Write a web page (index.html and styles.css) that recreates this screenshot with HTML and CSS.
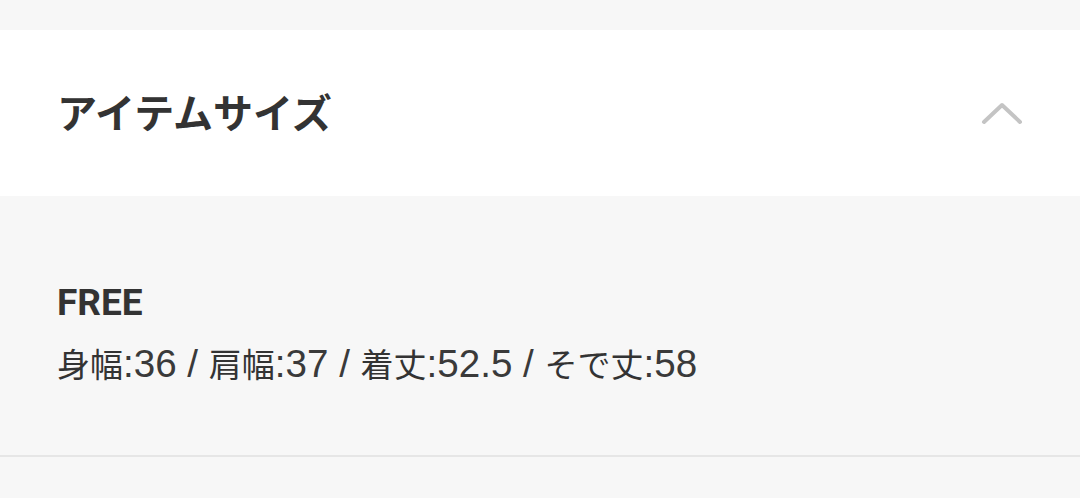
FILE: index.html
```html
<!DOCTYPE html>
<html lang="ja">
<head>
  <meta charset="UTF-8" />
  <meta name="viewport" content="width=device-width, initial-scale=1.0" />
  <title>アイテムサイズ</title>
  <link rel="stylesheet" href="styles.css">
</head>
<body>
  <div class="spacer"></div>
  <section class="accordion">
    <div class="accordion-head">
      <h2 class="accordion-title">アイテムサイズ</h2>
      <svg class="chevron" width="42" height="24" viewBox="0 0 42 24">
        <polyline points="3,21 21,4 39,21" />
      </svg>
    </div>
    <div class="accordion-body">
      <div class="size-name">FREE</div>
      <div class="size-detail"><span class="ja">身幅</span>:36 / <span class="ja">肩幅</span>:37 / <span class="ja">着丈</span>:52.5 / <span class="ja">そで丈</span>:58</div>
    </div>
  </section>
  <div class="divider"></div>
</body>
</html>
```

FILE: styles.css
```css
body {
  margin: 0;
  padding: 0;
  background: #f7f7f7;
  color: #333;
  font-family: Roboto, "Noto Sans CJK JP", sans-serif;
}
.spacer {
  height: 30px;
}
.accordion-head {
  background: #fff;
  height: 166px;
  padding: 0 57px;
  display: flex;
  align-items: center;
  justify-content: space-between;
}
.accordion-title {
  margin: 0 0 4px;
  font-family: "Noto Sans CJK JP", sans-serif;
  font-size: 40px;
  font-weight: 600;
  color: #333;
}
.chevron polyline {
  fill: none;
  stroke: #c4c4c4;
  stroke-width: 4;
  stroke-linecap: round;
  stroke-linejoin: round;
}
.accordion-body {
  padding: 84px 57px 62px;
  height: 259px;
  box-sizing: border-box;
}
.size-name {
  font-size: 37px;
  font-weight: bold;
  line-height: 46px;
}
.size-detail {
  margin-top: 14px;
  font-family: "Liberation Sans", "Noto Sans CJK JP", sans-serif;
  font-size: 38.6px;
  line-height: 46px;
  color: #3a3a3a;
}
.size-detail .ja {
  font-family: "Noto Sans CJK JP", sans-serif;
  font-size: 33px;
  color: #333;
}
.divider {
  height: 2px;
  background: #e6e6e6;
}
```
